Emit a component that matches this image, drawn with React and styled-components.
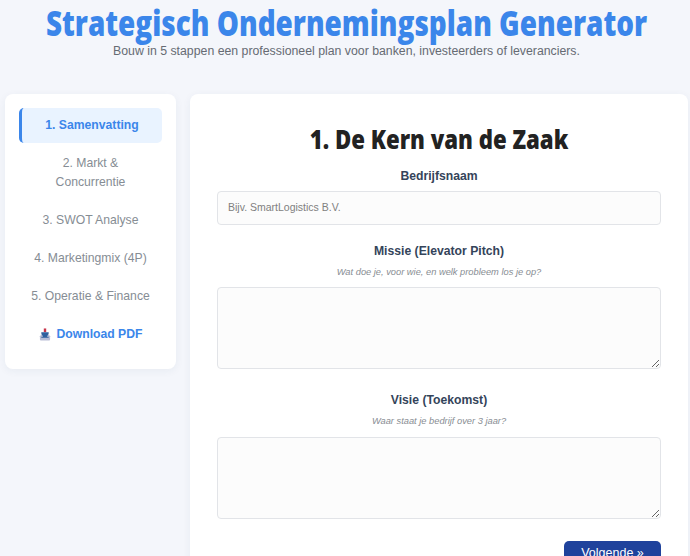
import React from 'react';
import styled, {createGlobalStyle} from 'styled-components';

const GlobalStyle = createGlobalStyle`
  html, body {
    margin: 0;
    height: 556px;
    overflow: hidden;
    background: #f4f6fb;
    font-family: "Liberation Sans", Arial, sans-serif;
  }
  * {
    box-sizing: border-box;
  }
`;

const Page = styled.div`
  padding: 0 2px 0 5px;
`;

const Header = styled.header`
  text-align: center;
  height: 94px;
`;

const Title = styled.h1`
  margin: 0 -60px;
  padding-top: 3px;
  font-family: "Open Sans", sans-serif;
  font-size: 35px;
  line-height: 40px;
  font-weight: 800;
  color: #3b86ea;
  white-space: nowrap;
  transform: scaleX(0.797);
`;

const Subtitle = styled.p`
  margin: 0;
  font-size: 12.3px;
  line-height: 16px;
  color: #666b73;
`;

const Layout = styled.div`
  display: flex;
  align-items: flex-start;
  gap: 14px;
`;

const Sidebar = styled.nav`
  width: 171px;
  flex: none;
  height: 275px;
  padding: 14px;
  background: #fff;
  border-radius: 8px;
  box-shadow: 0 2px 8px rgba(40, 60, 100, 0.06);
  display: flex;
  flex-direction: column;
`;

const Step = styled.div`
  padding: 8px 10px;
  margin-bottom: 3.5px;
  text-align: center;
  font-size: 12.2px;
  line-height: 18.5px;
  border-radius: 5px;
  font-weight: ${p => (p.$active ? 700 : 400)};
  color: ${p => (p.$active ? '#3b86ea' : '#868d94')};
  background: ${p => (p.$active ? '#e9f3ff' : 'transparent')};
  border-left: ${p => (p.$active ? '3px solid #3b86ea' : '0')};
`;

const DownloadLink = styled(Step)`
  display: flex;
  align-items: center;
  justify-content: center;
  gap: 6px;
  font-weight: 700;
  color: #3b86ea;
`;

const Main = styled.main`
  flex: 1;
  height: 520px;
  padding: 27px;
  background: #fff;
  border-radius: 8px;
  box-shadow: 0 2px 8px rgba(40, 60, 100, 0.06);
`;

const Heading = styled.h2`
  margin: 0 0 11px;
  font-family: "Open Sans", sans-serif;
  font-size: 27px;
  line-height: 36px;
  font-weight: 800;
  color: #222;
  text-align: center;
  transform: scaleX(0.822);
`;

const Label = styled.label`
  display: block;
  text-align: center;
  font-size: 12.2px;
  line-height: 16px;
  font-weight: 700;
  color: #34445a;
  margin-bottom: 7px;
`;

const Hint = styled.div`
  text-align: center;
  font-size: 9.3px;
  line-height: 12px;
  font-style: italic;
  color: #888d93;
  margin: 6px 0 9.4px;
`;

const TextInput = styled.input`
  display: block;
  width: 100%;
  height: 34px;
  padding: 0 10px 2px;
  margin-bottom: 18px;
  border: 1px solid #e2e4e8;
  border-radius: 4px;
  background: #fcfcfc;
  font-family: inherit;
  font-size: 10.5px;
  &::placeholder {
    color: #808080;
  }
`;

const TextArea = styled.textarea`
  display: block;
  width: 100%;
  height: 82px;
  margin-bottom: ${p => p.$gap}px;
  border: 1px solid #e2e4e8;
  border-radius: 4px;
  background: #fcfcfc;
  resize: vertical;
`;

const Actions = styled.div`
  display: flex;
  justify-content: flex-end;
`;

const NextButton = styled.button`
  width: 97px;
  height: 25px;
  padding: 0;
  border: 0;
  border-radius: 5px;
  background: #1f429c;
  color: #fff;
  font-family: inherit;
  font-size: 12.5px;
`;

const InboxIcon = () => (
  <svg width="12" height="14" viewBox="0 0 13 14">
    <path d="M3 7h7l2 2.5V13a1 1 0 0 1-1 1H2a1 1 0 0 1-1-1V9.500z" fill="#b9bdd6" />
    <path d="M5.200 1h2.600v4H5.200z" fill="#c8344a" />
    <path d="M2.500 5h8v1.500L8.500 10h2v1h-8v-1h2L2.500 6.500z" fill="#2f5f9e" />
  </svg>
);

const steps = [
  '1. Samenvatting',
  '2. Markt & Concurrentie',
  '3. SWOT Analyse',
  '4. Marketingmix (4P)',
  '5. Operatie & Finance',
];

const App = () => (
  <Page>
    <GlobalStyle />
    <Header>
      <Title>Strategisch Ondernemingsplan Generator</Title>
      <Subtitle>Bouw in 5 stappen een professioneel plan voor banken, investeerders of leveranciers.</Subtitle>
    </Header>
    <Layout>
      <Sidebar>
        {steps.map((step, i) => (
          <Step key={step} $active={i === 0}>
            {step}
          </Step>
        ))}
        <DownloadLink>
          <InboxIcon />
          Download PDF
        </DownloadLink>
      </Sidebar>
      <Main>
        <Heading>1. De Kern van de Zaak</Heading>
        <Label>Bedrijfsnaam</Label>
        <TextInput placeholder="Bijv. SmartLogistics B.V." />
        <Label>Missie (Elevator Pitch)</Label>
        <Hint>Wat doe je, voor wie, en welk probleem los je op?</Hint>
        <TextArea $gap={23} />
        <Label>Visie (Toekomst)</Label>
        <Hint>Waar staat je bedrijf over 3 jaar?</Hint>
        <TextArea $gap={22} />
        <Actions>
          <NextButton>Volgende »</NextButton>
        </Actions>
      </Main>
    </Layout>
  </Page>
);

export default App;
